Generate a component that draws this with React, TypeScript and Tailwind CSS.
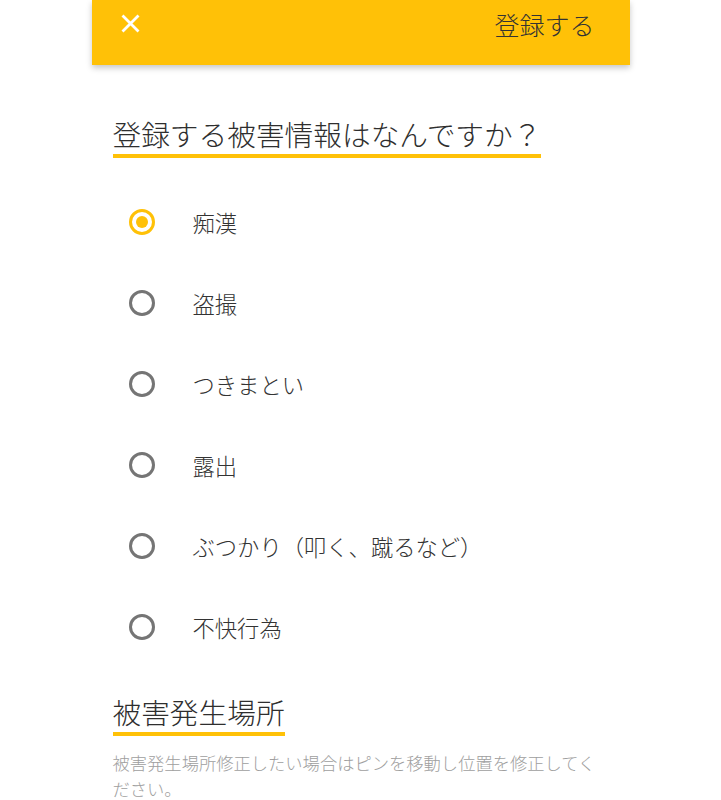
import React from "react";

const options = ["痴漢", "盗撮", "つきまとい", "露出", "ぶつかり（叩く、蹴るなど）", "不快行為"];

function Radio({ checked }: { checked: boolean }) {
  return (
    <span
      className={
        checked
          ? "flex h-[26px] w-[26px] shrink-0 items-center justify-center rounded-full border-[3px] border-[#FFC107]"
          : "flex h-[26px] w-[26px] shrink-0 items-center justify-center rounded-full border-[3px] border-[#757575]"
      }
    >
      {checked && <span className="h-[12px] w-[12px] rounded-full bg-[#FFC107]" />}
    </span>
  );
}

export default function App() {
  return (
    <div
      className="min-h-[800px] bg-white font-light"
      style={{ fontFamily: '"Noto Sans CJK JP", "Noto Sans", sans-serif' }}
    >
      <div className="mx-auto w-[538px]">
        <header className="h-[65px] bg-[#FFC107] shadow-[0_3px_6px_rgba(0,0,0,0.22)]">
          <div className="flex h-[47px] items-center justify-between pl-[29px] pr-[35px]">
            <svg width="19" height="19" viewBox="0 0 19 19" className="shrink-0">
              <path d="M1.5 1.5 L17.5 17.5 M17.5 1.5 L1.5 17.5" stroke="#ffffff" strokeWidth="2.8" strokeLinecap="butt" fill="none" />
            </svg>
            <span className="text-[25px] leading-[30px] text-[#333333]">登録する</span>
          </div>
        </header>

        <main className="px-[21px]">
          <div className="mt-[51px]">
            <h2 className="inline-block border-b-4 border-[#FFC107] pb-[2px] text-[28.7px] font-light leading-[36px] text-[#2e2e2e]">
              登録する被害情報はなんですか？
            </h2>
          </div>

          <ul className="mt-[23px]">
            {options.map((o, i) => (
              <li key={o} className="flex h-[81px] items-center pl-[16px]">
                <Radio checked={i === 0} />
                <span className="ml-[38px] text-[22.3px] leading-[30px] text-[#333333]">{o}</span>
              </li>
            ))}
          </ul>

          <div className="mt-[27px]">
            <h2 className="inline-block border-b-4 border-[#FFC107] pb-[2px] text-[28.7px] font-light leading-[36px] text-[#2e2e2e]">
              被害発生場所
            </h2>
          </div>

          <p className="mt-[14px] text-[17.3px] leading-[26px] text-[#9e9e9e]">
            被害発生場所修正したい場合はピンを移動し位置を修正してください。
          </p>
        </main>
      </div>
    </div>
  );
}
